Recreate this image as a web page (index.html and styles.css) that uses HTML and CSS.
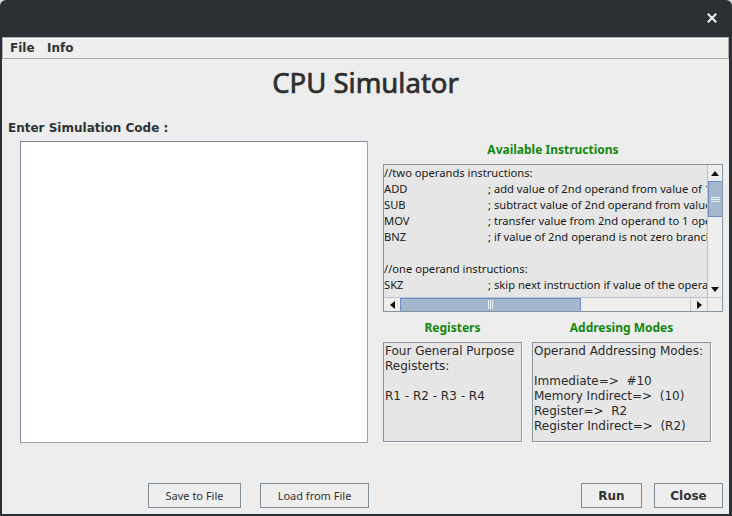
FILE: index.html
```html
<!DOCTYPE html>
<html>
<head>
<meta charset="utf-8">
<link rel="stylesheet" href="styles.css">
</head>
<body>
<div class="window">
  <div class="titlebar">
    <svg class="close-x" width="10" height="10" viewBox="0 0 10 10"><path d="M1.5 1.5 L8.5 8.5 M8.5 1.5 L1.5 8.5" stroke="#f2f2f2" stroke-width="2" stroke-linecap="square"/></svg>
  </div>
  <div class="frame">
    <div class="menubar"><span class="menu-item">File</span><span class="menu-item">Info</span></div>
    <h1 class="app-title">CPU Simulator</h1>
    <div class="main">
      <div class="left">
        <div class="label">Enter Simulation Code :</div>
        <div class="code-area"></div>
      </div>
      <div class="right">
        <div class="green-head">Available Instructions</div>
        <div class="scrollpane">
          <div class="viewport">
            <div class="line">//two operands instructions:</div>
            <div class="line"><span class="mn">ADD</span><span class="cm">; add value of 2nd operand from value of 1st operand and store in 1st</span></div>
            <div class="line"><span class="mn">SUB</span><span class="cm">; subtract value of 2nd operand from value of 1st operand</span></div>
            <div class="line"><span class="mn">MOV</span><span class="cm">; transfer value from 2nd operand to 1 operand</span></div>
            <div class="line"><span class="mn">BNZ</span><span class="cm">; if value of 2nd operand is not zero branch to 1st operand</span></div>
            <div class="line">&nbsp;</div>
            <div class="line">//one operand instructions:</div>
            <div class="line"><span class="mn">SKZ</span><span class="cm">; skip next instruction if value of the operand is zero</span></div>
          </div>
          <div class="vbar">
            <div class="arrow-btn"><svg width="8" height="5" viewBox="0 0 8 5"><path d="M0 5 L4 0 L8 5 Z" fill="#111"/></svg></div>
            <div class="vthumb"><svg width="9" height="5" viewBox="0 0 9 5"><path d="M0 0.5 H9 M0 2.5 H9 M0 4.5 H9" stroke="#eef3f8" stroke-width="1"/></svg></div>
            <div class="vtrack"></div>
            <div class="arrow-btn"><svg width="8" height="5" viewBox="0 0 8 5"><path d="M0 0 L4 5 L8 0 Z" fill="#111"/></svg></div>
          </div>
          <div class="hbar">
            <div class="arrow-btn h"><svg width="5" height="8" viewBox="0 0 5 8"><path d="M5 0 L0 4 L5 8 Z" fill="#111"/></svg></div>
            <div class="hthumb"><svg width="5" height="9" viewBox="0 0 5 9"><path d="M0.5 0 V9 M2.5 0 V9 M4.5 0 V9" stroke="#eef3f8" stroke-width="1"/></svg></div>
            <div class="htrack"></div>
            <div class="arrow-btn h"><svg width="5" height="8" viewBox="0 0 5 8"><path d="M0 0 L5 4 L0 8 Z" fill="#111"/></svg></div>
          </div>
          <div class="corner"></div>
        </div>
        <div class="lower">
          <div class="panel reg">
            <div class="green-head">Registers</div>
            <div class="box">Four General Purpose<br>Registerts:<br>&nbsp;<br>R1 - R2 - R3 - R4</div>
          </div>
          <div class="panel addr">
            <div class="green-head">Addresing Modes</div>
            <div class="box">Operand Addressing Modes:<br>&nbsp;<br>Immediate=&gt;&nbsp; #10<br>Memory Indirect=&gt;&nbsp; (10)<br>Register=&gt;&nbsp; R2<br>Register Indirect=&gt;&nbsp; (R2)</div>
          </div>
        </div>
      </div>
    </div>
    <div class="footer">
      <button class="btn light save">Save to File</button>
      <button class="btn light load">Load from File</button>
      <button class="btn strong run">Run</button>
      <button class="btn strong close">Close</button>
    </div>
  </div>
</div>
</body>
</html>
```
FILE: styles.css
```css
* { box-sizing: border-box; margin: 0; padding: 0; }
html, body { width: 732px; height: 516px; overflow: hidden; background: #d9d9d9; }
.window {
  width: 732px; height: 516px;
  display: flex; flex-direction: column;
  background: #2c3034;
  border-radius: 6px 6px 0 0;
}
.titlebar {
  height: 37px; flex: none;
  display: flex; align-items: center; justify-content: flex-end;
  padding-right: 15px; padding-bottom: 1px;
}
.close-x { display: block; }
.frame {
  flex: 1;
  margin: 0 3px 2px 2px;
  background: #ededed;
  display: flex; flex-direction: column;
}
.menubar {
  height: 22px; flex: none;
  border: 1px solid #a8a8a8;
  box-shadow: inset 1px 1px 0 #fafafa;
  background: #eeeeee;
  padding-left: 7px;
  display: flex; align-items: center;
  font-family: "DejaVu Sans", sans-serif; font-weight: bold; font-size: 12px;
  color: #2e3436; line-height: 20px;
}
.menu-item { margin-right: 12.5px; }
.app-title {
  margin-top: 8px;
  height: 32px; line-height: 32px;
  text-align: center;
  font-family: "Noto Sans", sans-serif; font-weight: normal; font-size: 27.5px;
  -webkit-text-stroke: 0.7px #2e2e2e;
  color: #2e2e2e;
}
.main { display: flex; flex: none; }
.left { width: 360px; margin-left: 6px; padding-top: 21px; }
.label {
  font-family: "DejaVu Sans", sans-serif; font-weight: bold; font-size: 12px;
  line-height: 16px; color: #2e3436;
}
.code-area {
  margin: 5px 0 0 12px;
  width: 348px; height: 302px;
  background: #ffffff;
  border: 1px solid #7d8c9a;
  border-right-color: #9aa6b1; border-bottom-color: #9aa6b1;
}
.right { width: 340px; margin-left: 15px; padding-top: 43px; }
.green-head {
  font-family: "Noto Sans", sans-serif; font-weight: bold; font-size: 12px;
  line-height: 16px; color: #12880f; text-align: center;
}
.scrollpane {
  margin-top: 6px;
  width: 340px; height: 148px;
  border: 1px solid #8795a3;
  display: grid;
  grid-template-columns: 1fr 15px;
  grid-template-rows: 1fr 14px;
  background: #eeeeee;
}
.viewport {
  background: #e6e6e6;
  overflow: hidden;
  font-family: "Noto Sans", sans-serif; font-size: 11.2px; line-height: 16px;
  color: #1a1a1a;
  white-space: nowrap;
}
.line { height: 16px; }
.mn { display: inline-block; width: 104px; }
.vbar {
  display: flex; flex-direction: column;
  border-left: 1px solid #b5c3d1;
  background: #eeeeee;
}
.arrow-btn {
  height: 16px; flex: none;
  display: flex; align-items: center; justify-content: center;
  background: #eeeeee;
}
.arrow-btn.h { width: 16px; height: auto; }
.vthumb {
  height: 36px; flex: none;
  background: #a3b8cc;
  border: 1px solid #6d8ec4;
  border-right-color: #a3b8cc;
  display: flex; align-items: center; justify-content: center;
}
.vtrack { flex: 1; background: #eeeeee; }
.hbar {
  display: flex;
  border-top: 1px solid #b5c3d1;
  background: #eeeeee;
}
.hthumb {
  width: 181px; flex: none;
  background: #a3b8cc;
  border: 1px solid #6d8ec4;
  border-bottom-color: #a3b8cc;
  display: flex; align-items: center; justify-content: center;
}
.htrack { flex: 1; background: #eeeeee; border-right: 1px solid #c8c8c8; }
.corner { background: #eeeeee; border-left: 1px solid #c8c8c8; border-top: 1px solid #c8c8c8; }
.lower { display: flex; gap: 10px; margin-top: 8px; }
.panel.reg { width: 139px; }
.panel.addr { width: 179px; }
.box {
  margin-top: 6px;
  height: 100px;
  background: #e6e6e6;
  border: 1px solid #8795a3;
  box-shadow: 1px 1px 0 #ffffff;
  padding: 1px 0 0 1px;
  font-family: "DejaVu Sans", sans-serif; font-size: 12px; line-height: 15px;
  color: #2a2a2a;
  white-space: nowrap; overflow: hidden;
}
.footer {
  margin-top: auto;
  display: flex; align-items: flex-end;
  padding: 0 6px 6px 146px;
}
.btn {
  height: 25px;
  background: #eeeeee;
  border: 1px solid #7f8d9b;
  color: #333333;
  display: flex; align-items: center; justify-content: center;
}
.btn.light { font-family: "Noto Sans", sans-serif; font-size: 11px; }
.btn.strong { font-family: "DejaVu Sans", sans-serif; font-weight: bold; font-size: 12px; }
.save { width: 93px; }
.load { width: 109px; margin-left: 19px; }
.run { width: 61px; margin-left: auto; }
.close { width: 69px; margin-left: 12px; }
```
